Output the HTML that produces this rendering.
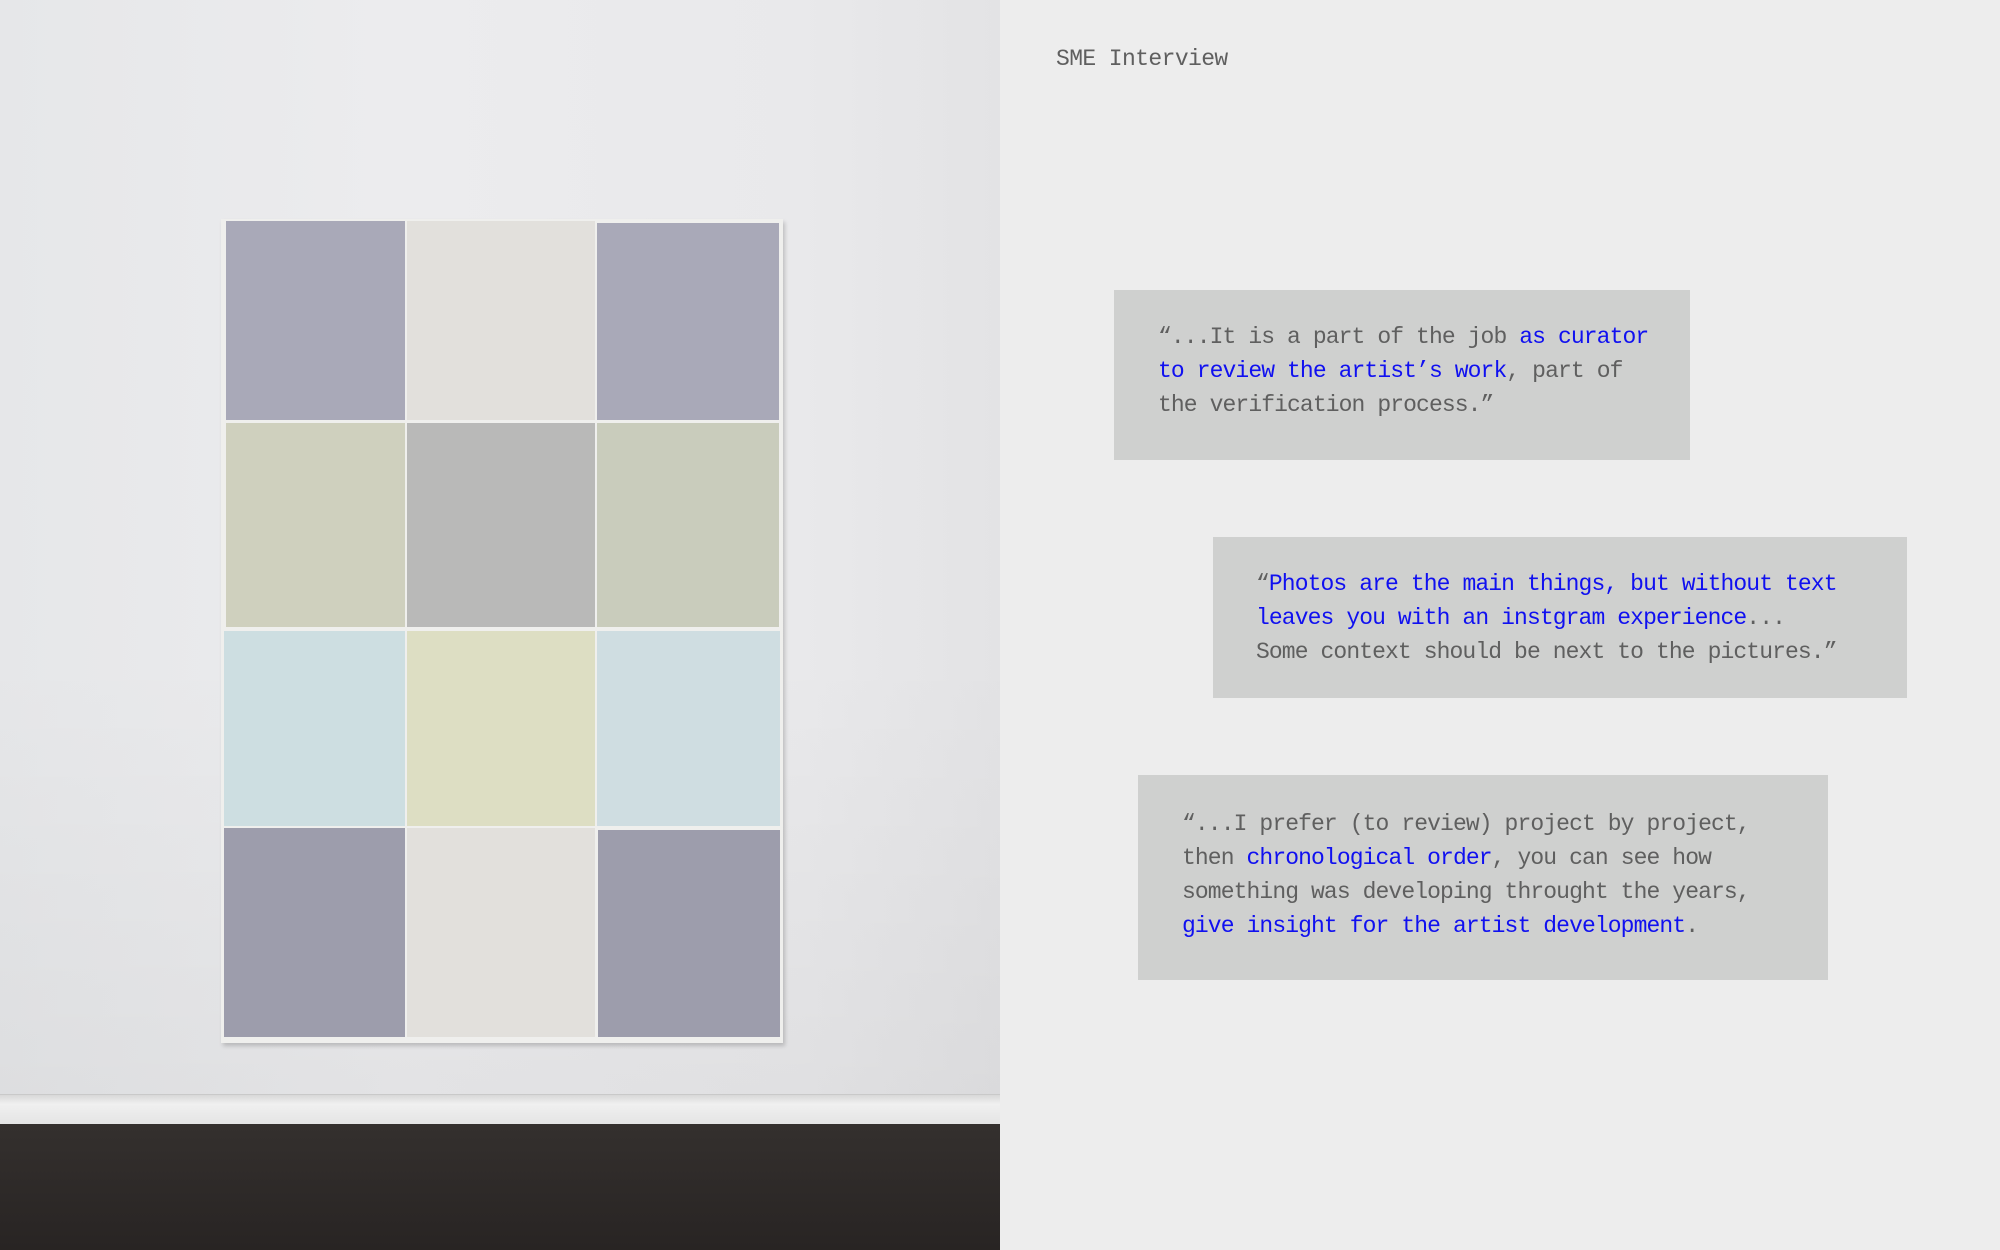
<!DOCTYPE html>
<html><head><meta charset="utf-8"><style>
html,body{margin:0;padding:0;}
body{width:2000px;height:1250px;position:relative;overflow:hidden;background:#ededed;font-family:"Liberation Mono",monospace;}
.wall{position:absolute;left:0;top:0;width:1000px;height:1094px;background:linear-gradient(180deg,rgba(0,0,0,0) 60%,rgba(0,0,0,0.04) 100%),linear-gradient(90deg,#e6e7e9 0%,#ececee 40%,#e9e9eb 80%,#e3e3e5 100%);}
.base{position:absolute;left:0;top:1094px;width:1000px;height:30px;background:linear-gradient(#d8d8d8,#f0f0f0 30%,#e4e4e4);border-top:1px solid #c9c9c9;}
.floor{position:absolute;left:0;top:1124px;width:1000px;height:126px;background:linear-gradient(#34302e,#282423);}
.frame{position:absolute;left:221px;top:219px;width:562px;height:824px;background:#efefed;box-shadow:2px 3px 4px rgba(0,0,0,.18);}
.t{position:absolute;}
.q{position:absolute;background:#cfd0cf;color:#5f5f5f;font-size:23px;letter-spacing:-0.9px;line-height:34px;padding:30px 0 0 44px;box-sizing:border-box;white-space:nowrap;}
.b{color:#1010f0;}
.title{position:absolute;left:1056px;top:46px;font-size:23px;letter-spacing:-0.6px;color:#5f5f5f;}
</style></head><body>
<div class="wall"></div>
<div class="base"></div>
<div class="floor"></div>
<div class="frame"></div>
<div class="t" style="left:226px;top:221px;width:179px;height:199px;background:#a9a9b8"></div>
<div class="t" style="left:407px;top:221px;width:188px;height:199px;background:#e2e0dc"></div>
<div class="t" style="left:597px;top:223px;width:182px;height:197px;background:#a9a9b8"></div>
<div class="t" style="left:226px;top:423px;width:179px;height:204px;background:#cfd0be"></div>
<div class="t" style="left:407px;top:423px;width:188px;height:204px;background:#b9b9b8"></div>
<div class="t" style="left:597px;top:423px;width:182px;height:204px;background:#c9ccbc"></div>
<div class="t" style="left:224px;top:631px;width:181px;height:195px;background:#cddee1"></div>
<div class="t" style="left:407px;top:631px;width:188px;height:195px;background:#dddec3"></div>
<div class="t" style="left:597px;top:631px;width:183px;height:195px;background:#cfdde1"></div>
<div class="t" style="left:224px;top:828px;width:181px;height:209px;background:#9d9dac"></div>
<div class="t" style="left:407px;top:828px;width:188px;height:209px;background:#e2e0dc"></div>
<div class="t" style="left:598px;top:830px;width:182px;height:207px;background:#9d9dac"></div>

<div class="title">SME Interview</div>

<div class="q" style="left:1114px;top:290px;width:576px;height:170px;">“...It is a part of the job <span class="b">as curator</span><br><span class="b">to review the artist’s work</span>, part of<br>the verification process.”</div>

<div class="q" style="left:1213px;top:537px;width:694px;height:161px;padding-left:43px;">“<span class="b">Photos are the main things, but without text</span><br><span class="b">leaves you with an instgram experience</span>...<br>Some context should be next to the pictures.”</div>

<div class="q" style="left:1138px;top:775px;width:690px;height:205px;padding-top:32px;">“...I prefer (to review) project by project,<br>then <span class="b">chronological order</span>, you can see how<br>something was developing throught the years,<br><span class="b">give insight for the artist development</span>.</div>
</body></html>
